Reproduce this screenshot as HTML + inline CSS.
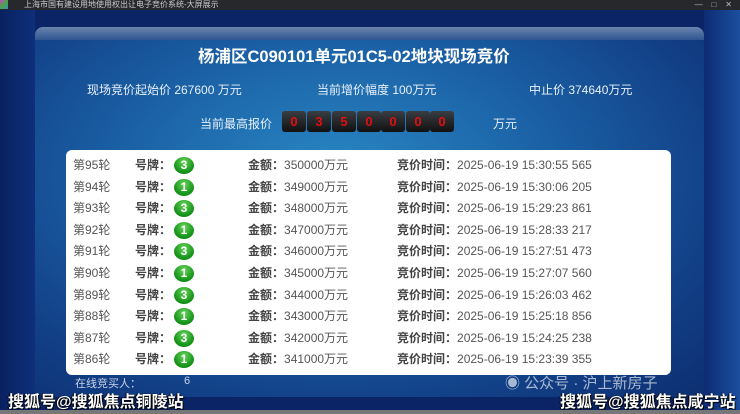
<!DOCTYPE html>
<html><head><meta charset="utf-8"><style>
*{margin:0;padding:0;box-sizing:border-box}
body{width:740px;height:414px;overflow:hidden;position:relative;background:#0b2466;font-family:"Liberation Sans","Noto Sans CJK SC",sans-serif}
.tb{position:absolute;left:0;top:0;width:740px;height:10px;background:#26282c;color:#ccc;font-size:8px;line-height:9px;padding-left:24px;white-space:nowrap;overflow:hidden}
.side{position:absolute;top:10px;height:404px;background:linear-gradient(90deg,#0a2160,#0e2f7a)}
.panel{position:absolute;left:35px;top:27px;width:669px;height:370px;border-radius:8px 8px 0 0;background:radial-gradient(ellipse at 45% 40%,#2a88c4 0%,#1b62a6 40%,#123f86 75%,#0d2f72 100%)}
.strip{position:absolute;left:35px;top:27px;width:669px;height:13px;border-radius:8px 8px 0 0;background:linear-gradient(#6a84ae,#2f5590)}
.t{position:absolute;color:#e8f0fa;white-space:nowrap}
.digit{position:absolute;top:111px;width:24px;height:21px;border-radius:3px;background:linear-gradient(#3a3d42,#111);color:#e01010;font-weight:bold;font-size:13px;text-align:center;line-height:21px}
.tbl{position:absolute;left:66px;top:150px;width:605px;height:225px;background:#fff;border-radius:6px}
.r{position:absolute;left:0;width:605px;height:21px;font-size:12px;color:#555;line-height:21px}
.r span{position:absolute;white-space:nowrap}
.r b{color:#444}
.b{position:absolute;left:108px;top:2px;width:20px;height:17px;border-radius:50%;background:radial-gradient(circle at 50% 30%,#6cd45c,#1a9a1e 60%,#0d6e12);color:#fff;font-weight:bold;font-size:12px;text-align:center;line-height:17px}
.wm{position:absolute;color:#fff;font-weight:bold;font-size:16px;text-shadow:1px 1px 1px #000,-1px 0 1px #000;white-space:nowrap}
</style></head><body>
<div class="tb">上海市国有建设用地使用权出让电子竞价系统-大屏展示<span style="position:absolute;right:8px;top:0;color:#bbb">—&nbsp;&nbsp;&nbsp;&nbsp;□&nbsp;&nbsp;&nbsp;&nbsp;✕</span></div>
<div style="position:absolute;left:0;top:0;width:8px;height:9px;background:linear-gradient(135deg,#c4c,#4a4,#48c)"></div>
<div class="side" style="left:0;width:35px"></div>
<div class="side" style="left:704px;width:36px;background:linear-gradient(90deg,#0d2c74,#1b4f9e)"></div>
<div class="panel"></div>
<div class="strip"></div>
<div class="t" style="left:198px;top:43px;font-size:16.5px;font-weight:bold;color:#fff">杨浦区C090101单元01C5-02地块现场竞价</div>
<div class="t" style="left:87px;top:81px;font-size:12px">现场竞价起始价 267600 万元</div>
<div class="t" style="left:317px;top:81px;font-size:12px">当前增价幅度 100万元</div>
<div class="t" style="left:529px;top:81px;font-size:12px">中止价 374640万元</div>
<div class="t" style="left:200px;top:115px;font-size:12px">当前最高报价</div>
<div class="digit" style="left:282px">0</div><div class="digit" style="left:307px">3</div><div class="digit" style="left:332px">5</div><div class="digit" style="left:357px">0</div><div class="digit" style="left:381px">0</div><div class="digit" style="left:406px">0</div><div class="digit" style="left:430px">0</div>
<div class="t" style="left:493px;top:115px;font-size:12px">万元</div>
<div class="tbl">
<div class="r" style="top:5px"><span style="left:7px">第95轮</span><span style="left:69px"><b>号牌：</b></span><div class="b">3</div><span style="left:182px"><b>金额：</b>350000万元</span><span style="left:331px"><b>竞价时间：</b>2025-06-19 15:30:55 565</span></div>
<div class="r" style="top:26.6px"><span style="left:7px">第94轮</span><span style="left:69px"><b>号牌：</b></span><div class="b">1</div><span style="left:182px"><b>金额：</b>349000万元</span><span style="left:331px"><b>竞价时间：</b>2025-06-19 15:30:06 205</span></div>
<div class="r" style="top:48.2px"><span style="left:7px">第93轮</span><span style="left:69px"><b>号牌：</b></span><div class="b">3</div><span style="left:182px"><b>金额：</b>348000万元</span><span style="left:331px"><b>竞价时间：</b>2025-06-19 15:29:23 861</span></div>
<div class="r" style="top:69.8px"><span style="left:7px">第92轮</span><span style="left:69px"><b>号牌：</b></span><div class="b">1</div><span style="left:182px"><b>金额：</b>347000万元</span><span style="left:331px"><b>竞价时间：</b>2025-06-19 15:28:33 217</span></div>
<div class="r" style="top:91.4px"><span style="left:7px">第91轮</span><span style="left:69px"><b>号牌：</b></span><div class="b">3</div><span style="left:182px"><b>金额：</b>346000万元</span><span style="left:331px"><b>竞价时间：</b>2025-06-19 15:27:51 473</span></div>
<div class="r" style="top:113px"><span style="left:7px">第90轮</span><span style="left:69px"><b>号牌：</b></span><div class="b">1</div><span style="left:182px"><b>金额：</b>345000万元</span><span style="left:331px"><b>竞价时间：</b>2025-06-19 15:27:07 560</span></div>
<div class="r" style="top:134.6px"><span style="left:7px">第89轮</span><span style="left:69px"><b>号牌：</b></span><div class="b">3</div><span style="left:182px"><b>金额：</b>344000万元</span><span style="left:331px"><b>竞价时间：</b>2025-06-19 15:26:03 462</span></div>
<div class="r" style="top:156.2px"><span style="left:7px">第88轮</span><span style="left:69px"><b>号牌：</b></span><div class="b">1</div><span style="left:182px"><b>金额：</b>343000万元</span><span style="left:331px"><b>竞价时间：</b>2025-06-19 15:25:18 856</span></div>
<div class="r" style="top:177.8px"><span style="left:7px">第87轮</span><span style="left:69px"><b>号牌：</b></span><div class="b">3</div><span style="left:182px"><b>金额：</b>342000万元</span><span style="left:331px"><b>竞价时间：</b>2025-06-19 15:24:25 238</span></div>
<div class="r" style="top:199.4px"><span style="left:7px">第86轮</span><span style="left:69px"><b>号牌：</b></span><div class="b">1</div><span style="left:182px"><b>金额：</b>341000万元</span><span style="left:331px"><b>竞价时间：</b>2025-06-19 15:23:39 355</span></div>
</div>
<div class="t" style="left:75px;top:375px;font-size:11px;color:#c8d4e8">在线竞买人：</div>
<div class="t" style="left:184px;top:375px;font-size:11px;color:#c8d4e8">6</div>
<div class="t" style="left:505px;top:372px;font-size:15px;color:rgba(220,225,235,.75)">◉ 公众号 · 沪上新房子</div>
<div class="wm" style="left:8px;top:388px">搜狐号@搜狐焦点铜陵站</div>
<div class="wm" style="left:560px;top:388px">搜狐号@搜狐焦点咸宁站</div>
<div style="position:absolute;left:0;top:410px;width:740px;height:4px;background:#777"></div>
</body></html>
